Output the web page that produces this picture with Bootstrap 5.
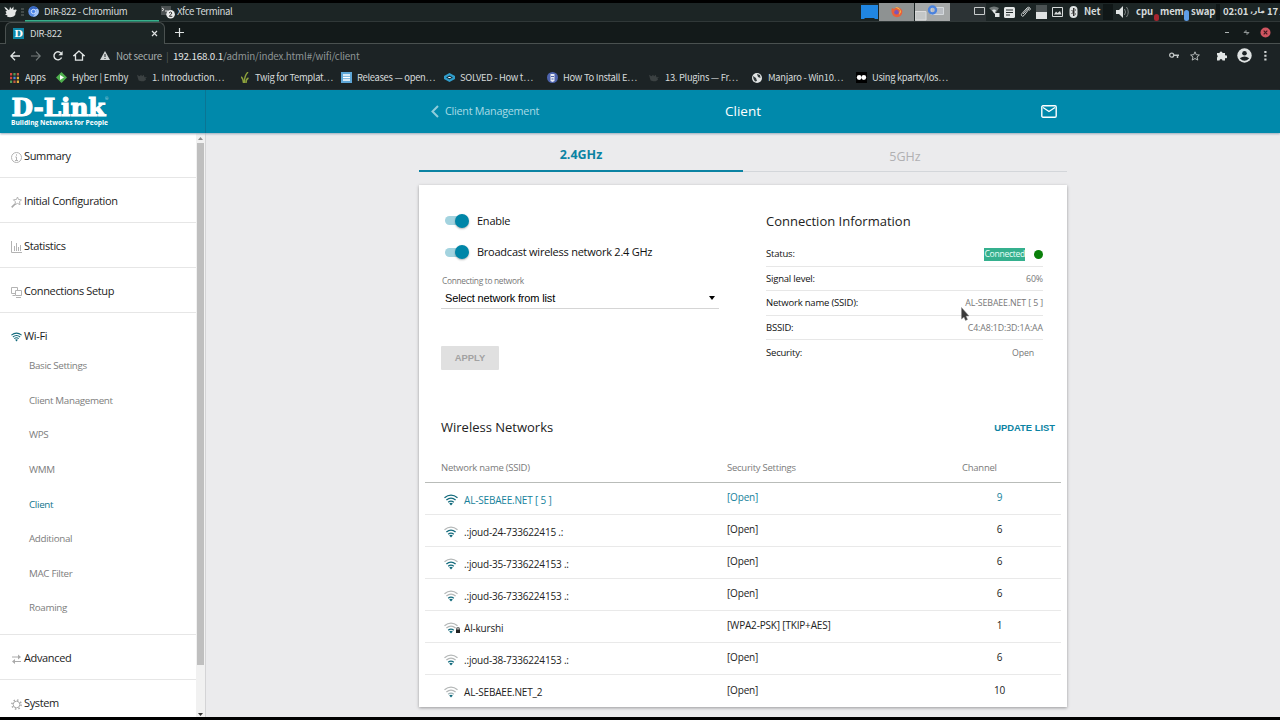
<!DOCTYPE html>
<html lang="en">
<head>
    <meta charset="UTF-8">
    <meta name="viewport" content="width=device-width, initial-scale=1.0">
    <title>DIR-822</title>
    <link rel="stylesheet" href="https://cdn.jsdelivr.net/npm/bootstrap@5.3.2/dist/css/bootstrap.min.css">
    <style>
        body {
            width: 1280px;
            height: 720px;
            padding: 3px 0;
            overflow: hidden;
            background: #000;
            font-family: "Open Sans", "Noto Sans", sans-serif;
            font-size: 12px;
            line-height: 16px;
            color: #222;
        }
        svg { display: block; flex: none; }
        .desk, .strip, .toolbar, .marks {
            font-family: "Noto Sans CJK SC", sans-serif;
            font-size: 9.4px;
            letter-spacing: -.3px;
            white-space: nowrap;
            color: #d5dada;
        }

        /* desktop panel */
        .desk { height: 19px; background: #1c2525; border-bottom: 1px solid #303838; }
        .desk > * { flex: none; }
        .desk span { position: relative; top: -1px; }
        .task { height: 17px; font-size: 9.6px; letter-spacing: -.35px; }
        .task.active { border-bottom: 1px solid #38b08c; box-shadow: 0 1px #2a7a64; }
        .space { width: 35px; height: 18px; background: #8e9292; }
        .tray { font-weight: 700; font-size: 9.6px; letter-spacing: -.1px; }
        .gap-block { background: #101717; height: 16px; }
        .pill { width: 5px; border-radius: 3px; align-self: flex-end; }

        /* browser */
        .strip { height: 22px; background: #131a1a; border-bottom: 1px solid #4a5150; }
        .browser-tab { width: 160px; height: 22px; background: #1c2525; border: 1px solid #4a5150; border-bottom: 0; border-radius: 6px 6px 0 0; margin-left: 5px; padding-left: 7px; }
        .toolbar { height: 25px; background: #1c2325; padding-bottom: 2px; font-size: 9.8px; }
        .address { letter-spacing: -.15px; color: #e3e6e6; }
        .marks { height: 21px; background: #1c2325; display: grid; grid-template-columns: 46px 81px 104px 100px 102px 104px 102px 103px 104px 1fr; padding: 0 0 4px 10px; }
        .marks span { margin-top: -1px; }

        /* router page */
        .page { height: 627px; background: #ebebed; }
        .top-bar { height: 43px; background: #0089ab; color: #fff; box-shadow: 0 1px 2px #9ab; z-index: 2; position: relative; }
        .brand-box { width: 206px; border-right: 1px solid #0a7594; padding: 5px 0 0 10px; }
        .content { width: 648px; margin-left: 213px; }
        .top-bar .content { padding-bottom: 1px; }
        .back { width: 254px; padding-left: 12px; color: #a9dbe6; font-size: 10.8px; letter-spacing: -.25px; }

        .side { width: 206px; background: #fff; border-right: 1px solid #d4d4d6; overflow: hidden; }
        .side-menu { width: 196px; }
        .side-item { height: 45px; border-bottom: 1px solid #e6e6e6; padding: 2px 0 0 11px; color: #1c1c1c; font-size: 11px; letter-spacing: -.36px; }
        .side-item svg { margin-right: 2px; margin-top: 2px; }
        .side-group { height: 322px; border-bottom: 1px solid #e6e6e6; }
        .side-group .side-item { border: 0; height: 36px; padding-top: 10px; }
        .side-sub { height: 34.6px; padding-left: 29px; color: #7d7d7d; font-size: 9.8px; letter-spacing: -.33px; }
        .side-sub.active { color: #11748b; }
        .scroller { width: 9px; background: #f1f1f1; }
        .scroller div { width: 7px; height: 522px; margin: 0 auto; background: #bfbfbf; }

        .band { height: 39px; border-bottom: 1px solid #d3d6da; font-size: 12.5px; color: #b0b0b2; }
        .band > div { width: 324px; height: 39px; padding-top: 8px; }
        .band .active { border-bottom: 2px solid #0b83a3; color: #0b83a3; font-weight: 700; padding-top: 6px; }
        .panel-card { height: 522px; margin-top: 13px; background: #fff; box-shadow: 0 1px 3px rgba(0,0,0,.35); }
        .settings { width: 300px; padding: 20px 0 0 22px; }
        .switch-row { height: 31.5px; font-size: 11px; letter-spacing: -.24px; color: #111; }
        .knob-track { width: 22px; height: 9px; margin: 0 10px 0 4px; border-radius: 5px; background: #a3d3df; }
        .knob { width: 14px; height: 14px; margin: -2.5px 0 0 10px; border-radius: 50%; background: #0086a8; box-shadow: 0 1px 2px rgba(0,0,0,.3); }
        .pick-label { font-size: 8.4px; letter-spacing: -.32px; color: #777; padding: 5px 0 0 1px; }
        .pick { width: 278px; height: 20px; border-bottom: 1px solid #d5d5d5; font: 11px/18px "Liberation Sans", sans-serif; letter-spacing: -.15px; color: #000; padding: 0 4px 2px; }
        .caret { border: 3.5px solid transparent; border-top: 4px solid #000; border-bottom: 0; }
        .apply { width: 58px; height: 24px; background: #e0e0e0; color: #a2a2a2; border: 0; border-radius: 1px; padding: 0; font: 700 9.4px/24px "Liberation Sans", sans-serif; }
        h2 { font-size: 13px; line-height: 18px; margin: 0; color: #222; font-weight: 400; }
        .info { width: 277px; margin-left: 47px; padding-top: 27px; }
        .info-row { height: 24.6px; border-bottom: 1px solid #e7e7e7; font-size: 9.5px; letter-spacing: -.2px; color: #111; padding-top: 1px; }
        .info-row span:last-child { color: #777; font-size: 8.8px; letter-spacing: -.12px; }
        .info-row:last-child { border: 0; }
        .info-row .picked { background: #35b08e; color: #e9fff8; font-size: 8.6px; line-height: 13px; letter-spacing: -.3px; margin-right: 9px; }
        .dot { width: 9px; height: 9px; border-radius: 50%; background: #0a800a; }

        .net-row { display: grid; grid-template-columns: 302px 235px 75px 1fr; height: 32px; margin: 0 6px; border-bottom: 1px solid #e9e9e9; font-size: 10px; letter-spacing: -.18px; color: #222; align-items: center; }
        .net-row > :first-child { padding-left: 19px; padding-top: 2px; }
        .net-row > :nth-child(2), .net-row > :nth-child(3) { padding-bottom: 3px; }
        .net-row > :nth-child(3) { text-align: center; }
        .net-row.active { color: #16829c; }
        .net-row:last-child { border: 0; }
        .net-head { height: 32px; border-bottom: 1px solid #b9bcb9; color: #7b7b7b; font-size: 9.5px; letter-spacing: -.25px; }
        .net-head > :first-child { padding: 2px 0 0 16px; }
        .net-head > :nth-child(2), .net-head > :nth-child(3) { padding: 2px 0 0; }
        .update { font: 700 9.4px/16px "Liberation Sans", sans-serif; color: #0b83a3; padding-top: 2px; }

        .wave { width: 14px; height: 12px; margin-right: 6px; --w1: #126a7c; --w2: #126a7c; --w3: #126a7c; --w4: #126a7c; }
        .lvl3 { --w4: #b5b8b8; }
        .lvl2 { --w4: #b5b8b8; --w3: #b5b8b8; }
        .lvl1 { --w4: #b5b8b8; --w3: #b5b8b8; --w2: #9fb4b8; }
        .padlock { margin: 5px 4px 0 -8px; }
        .pointer { position: absolute; left: 961px; top: 307px; z-index: 5; }
    </style>
</head>
<body>

<svg width="0" height="0" class="position-absolute">
    <symbol id="wave" viewBox="0 0 14 12">
        <g fill="none" stroke-width="1.3">
            <path d="M.5 3.7Q7-1.6 13.5 3.7" stroke="var(--w4)"/>
            <path d="M2.400 6Q7 2.200 11.600 6" stroke="var(--w3)"/>
            <path d="M4.200 8.200Q7 5.900 9.800 8.200" stroke="var(--w2)"/>
        </g>
        <path d="M5.200 9.400Q7 8.200 8.800 9.400L7 11.600z" fill="var(--w1)"/>
    </symbol>
    <symbol id="chromium" viewBox="0 0 12 12">
        <circle cx="6" cy="6" r="5.7" fill="#5b8ee6"/><path d="M6 .3a5.7 5.7 0 0 1 5 3L6 3.300A2.800 2.800 0 0 0 3.400 5L1.600 2.400A5.700 5.700 0 0 1 6 .3z" fill="#3767c2"/><path d="M11 3.300a5.700 5.700 0 0 1-5.400 8.400L8.400 7.400A2.800 2.800 0 0 0 8 3.300z" fill="#a8c8fa"/><circle cx="6" cy="6" r="2.400" fill="#4a83e8" stroke="#e6efff" stroke-width=".9"/>
    </symbol>
    <symbol id="fish" viewBox="0 0 12 10">
        <path d="M0 1l3 2 2-2 1 2 2-2 1 3h3l-2 2 1 1-3 2H5L2 8 1 5z" fill="#3b4142"/>
    </symbol>
</svg>

<!-- Desktop panel -->
<div class="desk d-flex align-items-center">
    <svg width="13" height="12" viewBox="0 0 13 12" style="margin-left:4px"><path d="M.3.8Q3 1.500 4.500 4L5.500 3.500 6 .8 7.500 3 9.500.5 9.500 4Q12 3 12.800 4L11.500 6.500Q12 9 9.500 10.500 6 12 3 10.500L3.500 9.500 1 8.500 2.500 7.500 1.500 5.500 3 4.800Q1 3.500.3.800z" fill="#e3e6e5"/></svg>
    <svg width="3" height="8" viewBox="0 0 3 8" style="margin-left:4px"><path d="M0 1h3M0 4h3M0 7h3" stroke="#68706f"/></svg>
    <div class="task active d-flex align-items-center" style="width:134px;margin-left:1px">
        <svg width="11" height="11" style="margin-left:3px"><use href="#chromium"/></svg><span style="margin-left:5px">DIR-822 - Chromium</span>
    </div>
    <div class="task d-flex align-items-center" style="width:702px">
        <svg width="15" height="14" viewBox="0 0 15 14" style="margin-left:2px"><path d="M0 1h10v9H0z" fill="#4b5152"/><path d="M1 3l2 1.500L1 6M4 6h3" stroke="#ddd" fill="none"/><circle cx="9.600" cy="9.200" r="4.300" fill="#e9ebeb"/><path d="M8 8q1.600-2 3 0L8.300 11.300H11.300" fill="none" stroke="#333"/></svg><span style="margin-left:1px">Xfce Terminal</span>
    </div>
    <svg width="17" height="14" viewBox="0 0 17 14"><path d="M0 0h17v14h-3l-1-1H4l-1 1H0z" fill="#2086e2"/></svg>
    <div class="space d-flex justify-content-center align-items-center" style="margin-left:1px">
        <svg width="12" height="12" viewBox="0 0 12 12"><path d="M1 2l2 1Q6 0 9 2l2 2q1 3-1 5.500-4 3.500-8 0Q-.5 6 1 2z" fill="#e9603a"/><path d="M4 1q5 0 6 5L8 9 9 4z" fill="#f7c04a"/><circle cx="5.500" cy="6.300" r="2.300" fill="#7a55b8"/></svg>
    </div>
    <svg width="35" height="18" viewBox="0 0 35 18" style="margin-left:1px"><path d="M0 0h35v18H0z" fill="#a5a8a8"/><path d="M0 8.500h11V17H0z" fill="#c4c7c7" stroke="#ddd"/><path d="M16 4.500h12.500v7H16z" fill="#b9bdc3" stroke="#d5d9dd"/><circle cx="17.500" cy="7" r="3.500" fill="none" stroke="#4a82dd" stroke-width="2.400"/></svg>
    <svg width="36" height="18" viewBox="0 0 36 18"><path d="M0 0h36v18H0z" fill="#2c3335"/><path d="M24.500 4.500h10v7h-10z" fill="#2c3335" stroke="#c8cccc"/></svg>
    <svg width="11" height="12" viewBox="0 0 11 12" style="margin-left:3px"><path d="M0 2Q5-1 10 2L6 8z" fill="#727979"/><path d="M3 4q2-1 4 0L5.500 8z" fill="#e0e4e4"/><path d="M6 7h4.500v4H6z" fill="#e0e4e4"/></svg>
    <svg width="11" height="11" viewBox="0 0 11 11" style="margin-left:4px"><rect width="11" height="11" rx="1.500" fill="#e5e8e8"/><path d="M2 3h7M2 5.500h7M2 8h4" stroke="#222a2a"/></svg>
    <svg width="11" height="12" viewBox="0 0 11 12" style="margin-left:5px"><path d="M3 8l4.500-5q1-1 1.500 0L4 9.500Q2.500 11 1.500 9.500 1 8.500 2 7.500L7 2q1.500-1.500 3 0 .8 1.300-.5 2.500" fill="none" stroke="#d0d4d4"/></svg>
    <svg width="11" height="14" viewBox="0 0 11 14" style="margin-left:5px"><path d="M0 0h11v7H0z" fill="#4b5253"/><path d="M0 7h11v7H0z" fill="#e0e3e3"/></svg>
    <svg width="11" height="10" viewBox="0 0 11 10" style="margin-left:5px"><path d="M.5.5h10v9H.5z" fill="none" stroke="#d8dcdc"/><path d="M2 7.500l2-3 1.500 1.500L8 4l1.500 3.500z" fill="#d8dcdc"/></svg>
    <svg width="9" height="12" viewBox="0 0 9 12" style="margin-left:6px"><rect x=".5" width="8" height="12" rx="4" fill="#dfe3e3"/><path d="M2.500 4l4 4-2 2V2l2 2-4 4" fill="none" stroke="#222" stroke-width=".9"/></svg>
    <span class="tray" style="margin-left:6px;width:19px">Net</span>
    <div class="gap-block" style="width:10px"></div>
    <svg width="14" height="12" viewBox="0 0 14 12" style="margin-left:3px"><path d="M0 4h3l4-4v12L3 8H0z" fill="#e0e4e4"/><path d="M8.500 3q2 3 0 6M10.500 1q3.500 5 0 10" fill="none" stroke="#7d8484"/></svg>
    <span class="tray" style="margin-left:6px;width:18px">cpu</span><div class="pill" style="height:7px;background:#a8262f"></div>
    <span class="tray" style="margin-left:1px;width:24px">mem</span><div class="pill" style="height:11px;background:#5f9de8"></div>
    <span class="tray" style="margin-left:2px;width:25px">swap</span><div class="gap-block" style="width:4px"></div>
    <div class="tray d-flex" style="margin-left:3px;width:58px;gap:2px">
        <span>02:01</span><span dir="rtl" style="font-family:'DejaVu Sans',sans-serif;font-size:7.500px;letter-spacing:0">مار,</span><span>17</span><span style="font-family:'DejaVu Sans',sans-serif;font-size:7.500px">ر</span>
    </div>
</div>

<!-- Browser tabs -->
<div class="strip d-flex align-items-center">
    <div class="browser-tab d-flex align-items-center">
        <svg width="11" height="11" viewBox="0 0 11 11"><path d="M0 0h11v11H0z" fill="#0f87a6"/><text x="1.200" y="9.200" font-family="DejaVu Serif" font-weight="700" font-size="10" fill="#fff">D</text></svg>
        <span style="margin-left:6px;width:121px">DIR-822</span>
        <svg width="7" height="7" viewBox="0 0 7 7"><path d="M1 1l5 5M6 1L1 6" stroke="#dfe3e3" stroke-width="1.200"/></svg>
    </div>
    <svg width="9" height="9" viewBox="0 0 9 9" style="margin-left:10px"><path d="M4.500 0v9M0 4.500h9" stroke="#dfe3e3" stroke-width="1.200"/></svg>
    <svg class="ms-auto" width="46" height="11" viewBox="0 0 46 11" style="margin-right:9px"><path d="M0 5.500h4" stroke="#aeb4b4"/><path d="M19 5.500l2-2v2h3l-2 2v-2z" stroke="#8e9494" fill="none"/><circle cx="40.500" cy="5.500" r="5" fill="#cf5560"/><path d="M38.700 3.700l3.600 3.600M42.300 3.700l-3.600 3.600" stroke="#401a20" stroke-width="1.200"/></svg>
</div>

<!-- Address bar -->
<div class="toolbar d-flex align-items-center">
    <svg width="10" height="10" viewBox="0 0 10 10" style="margin-left:10px"><path d="M10 5H1M5 .7L.8 5 5 9.300" fill="none" stroke="#e2e6e6" stroke-width="1.300"/></svg>
    <svg width="10" height="10" viewBox="0 0 10 10" style="margin-left:11px"><path d="M0 5h9M5 .7L9.200 5 5 9.300" fill="none" stroke="#747b7b" stroke-width="1.200"/></svg>
    <svg width="10" height="10" viewBox="0 0 10 10" style="margin-left:12px"><path d="M8.600 6.500A4 4 0 1 1 8 2.200" fill="none" stroke="#e2e6e6" stroke-width="1.400"/><path d="M9.600 0v4.200H5.400z" fill="#e2e6e6"/></svg>
    <svg width="12" height="11" viewBox="0 0 12 11" style="margin-left:10px"><path d="M6 1L1 5.500h1.500v4.700h7V5.500H11z" fill="none" stroke="#e2e6e6" stroke-width="1.300"/></svg>
    <svg width="10" height="9" viewBox="0 0 10 9" style="margin-left:15px"><path d="M5 0l5 9H0z" fill="#d0d4d4"/><path d="M5 3v3M5 7v1" stroke="#1c2325"/></svg>
    <span style="margin-left:6px;width:50px;color:#a7adad">Not secure</span>
    <span style="width:7px;color:#565d5e">|</span>
    <span class="address">192.168.0.1<span style="color:#8e9595">/admin/index.html#/wifi/client</span></span>
    <svg width="10" height="7" viewBox="0 0 10 7" class="ms-auto"><circle cx="2.700" cy="3.200" r="2" fill="none" stroke="#c0c5c5" stroke-width="1.300"/><path d="M5 3.200h5M8.500 3v3" stroke="#c0c5c5" stroke-width="1.500"/></svg>
    <svg width="10" height="10" viewBox="0 0 10 10" style="margin-left:11px"><path d="M5 .8l1.200 2.900 3.200.3-2.400 2 .8 3.100L5 7.500 2.200 9.100l.8-3.100-2.400-2 3.200-.3z" fill="none" stroke="#c5caca" stroke-width=".9"/></svg>
    <svg width="11" height="11" viewBox="0 0 11 11" style="margin-left:16px"><path d="M1 3h2.500a1.500 1.500 0 1 1 3 0H9v2.500a1.500 1.500 0 1 1 0 2.500v2.500H6.500a1.500 1.500 0 0 0-3 0H1V7.500a1.500 1.500 0 0 0 0-2.500z" fill="#e2e6e6"/></svg>
    <svg width="15" height="15" viewBox="0 0 15 15" style="margin-left:10px"><circle cx="7.500" cy="7.500" r="7.200" fill="#dfe3e3"/><circle cx="7.500" cy="5.200" r="2.300" fill="#1c2325"/><path d="M2.800 10.300q4.700-3.600 9.400 0-4.700 5-9.400 0z" fill="#1c2325"/></svg>
    <svg width="3" height="11" viewBox="0 0 3 11" style="margin:0 13px 0 12px"><path d="M.3 1h2.200v2H.3zM.3 4.700h2.200v2H.3zM.3 8.400h2.200v2H.3z" fill="#d0d4d4"/></svg>
</div>

<!-- Bookmarks -->
<div class="marks align-items-center">
    <div class="d-flex align-items-center"><svg width="9" height="10" viewBox="0 0 9 10"><path d="M0 0h2.200v2.500H0zM0 3.700h2.200v2.500H0z" fill="#d8453c"/><path d="M3.400 0h2.200v2.500H3.400zM0 7.400h2.200v2.500H0z" fill="#4e9c57"/><path d="M3.400 3.700h2.200v2.500H3.400z" fill="#4d86dd"/><path d="M6.800 0H9v2.500H6.800zM3.400 7.400h2.200v2.500H3.400z" fill="#c35a42"/><path d="M6.800 3.700H9v2.500H6.800zM6.800 7.400H9v2.500H6.800z" fill="#dfae3d"/></svg><span style="margin-left:6px">Apps</span></div>
    <div class="d-flex align-items-center"><svg width="11" height="11" viewBox="0 0 11 11"><path d="M5.500 0L11 5.500 5.500 11 0 5.500z" fill="#4fb04e"/><path d="M4 3l4 2.500L4 8z" fill="#fff"/></svg><span style="margin-left:5px;letter-spacing:-.15px">Hyber | Emby</span></div>
    <div class="d-flex align-items-center"><svg width="10" height="10"><use href="#fish"/></svg><span style="margin-left:5px;letter-spacing:-.15px">1. Introduction⋯</span></div>
    <div class="d-flex align-items-center"><svg width="8" height="11" viewBox="0 0 8 11"><path d="M2.500 11Q2 6 0 5M3.500 11Q3 4 7 0M5 11q0-4 2.500-5" stroke="#8ca13c" fill="none" stroke-width="1.400"/></svg><span style="margin-left:6px">Twig for Templat⋯</span></div>
    <div class="d-flex align-items-center"><svg width="11" height="11" viewBox="0 0 11 11"><path d="M0 0h11v11H0z" fill="#5ea6d6"/><path d="M2 3h7M2 5.500h7M2 8h7" stroke="#fff" stroke-width="1.300"/></svg><span style="margin-left:5px">Releases — open⋯</span></div>
    <div class="d-flex align-items-center" style="padding-left:1px"><svg width="11" height="9" viewBox="0 0 11 9"><path d="M5.500 0L11 3v3L5.500 9 0 6V3z" fill="#2f9ccb"/><path d="M2 4.500L5.500 2.500 9 4.500 5.500 6.500z" fill="#16343f"/><path d="M4.300 4.500h2.400" stroke="#fff"/></svg><span style="margin-left:5px">SOLVED - How t⋯</span></div>
    <div class="d-flex align-items-center"><svg width="11" height="11" viewBox="0 0 11 11"><circle cx="5.500" cy="5.500" r="5.500" fill="#4d63ad"/><path d="M3.500 2h4v7l-2 1-2-1z" fill="#e9ecf4"/><path d="M4 4.500h3M4.500 7h2" stroke="#4d63ad"/></svg><span style="margin-left:5px">How To Install E⋯</span></div>
    <div class="d-flex align-items-center"><svg width="10" height="10"><use href="#fish"/></svg><span style="margin-left:6px">13. Plugins — Fr⋯</span></div>
    <div class="d-flex align-items-center"><svg width="10" height="10" viewBox="0 0 10 10"><circle cx="5" cy="5" r="5" fill="#e1e4e4"/><path d="M1 3l3 2 1 3-2 .5Q1 6 1 3zM5 1l3 1 .5 3L6 4z" fill="#30383a"/></svg><span style="margin-left:6px">Manjaro - Win10⋯</span></div>
    <div class="d-flex align-items-center"><svg width="11" height="11" viewBox="0 0 11 11"><path d="M0 0h11v11H0z" fill="#000"/><circle cx="3.200" cy="5.500" r="2.400" fill="#fff"/><circle cx="7.800" cy="5.500" r="2.400" fill="#fff"/></svg><span style="margin-left:5px">Using kpartx/los⋯</span></div>
</div>

<!-- Router page -->
<div class="page">
    <div class="top-bar d-flex">
        <div class="brand-box">
            <svg width="110" height="36" viewBox="0 0 110 36" overflow="visible"><g fill="#fff"><text x="1.500" y="21" font-family="DejaVu Serif" font-weight="700" font-size="24" textLength="94" lengthAdjust="spacingAndGlyphs" stroke="#fff" stroke-width="1.100">D-Link</text><text x="1" y="29.500" font-family="Open Sans" font-weight="700" font-size="7.600" textLength="97" lengthAdjust="spacingAndGlyphs">Building Networks for People</text><text x="95" y="5" font-family="Open Sans" font-size="4" opacity=".7">®</text></g></svg>
        </div>
        <div class="content d-flex align-items-center">
            <div class="back d-flex align-items-center"><svg width="8" height="13" viewBox="0 0 8 13" style="margin-right:6px"><path d="M7 1L1.500 6.500 7 12" fill="none" stroke="#8fcddb" stroke-width="2"/></svg>Client Management</div>
            <div class="text-center" style="width:140px;font-size:13.500px">Client</div>
            <svg class="ms-auto" width="16" height="13" viewBox="0 0 16 13" style="margin-right:10px"><rect x=".8" y=".8" width="14.400" height="11.400" rx="1.200" fill="none" stroke="#fff" stroke-width="1.400"/><path d="M2 2.500l6 4 6-4" fill="none" stroke="#fff" stroke-width="1.300"/></svg>
        </div>
    </div>

    <div class="d-flex" style="height:584px">
        <div class="side d-flex">
            <div class="side-menu flex-shrink-0">
                <div class="side-item d-flex align-items-center"><svg width="11" height="11" viewBox="0 0 11 11"><circle cx="5.500" cy="5.500" r="5" fill="none" stroke="#b3b3b3"/><path d="M5.500 2.300v1.400M4.300 5h1.200v3.500M4 8.500h3" fill="none" stroke="#b3b3b3"/></svg>Summary</div>
                <div class="side-item d-flex align-items-center"><svg width="11" height="12" viewBox="0 0 11 12"><path d="M6.500 1l1 2.500 3 .3-2 2 .5 2.900-2.500-1.300L4 8.700l.4-2.900-2-2 3-.3z" fill="none" stroke="#b3b3b3"/><path d="M4 8L.7 11.400" stroke="#a8a8a8" stroke-width="1.600"/></svg>Initial Configuration</div>
                <div class="side-item d-flex align-items-center"><svg width="11" height="12" viewBox="0 0 11 12"><path d="M.5 0v11.500H11M3.500 10V5M5.500 10V2M7.500 10V6M9.500 10V4" fill="none" stroke="#b3b3b3"/></svg>Statistics</div>
                <div class="side-item d-flex align-items-center"><svg width="11" height="11" viewBox="0 0 11 11"><path d="M4 6.500H.5v-6h6V3M1.500 8.500H4M4.500 3.500h6v5h-6zM5 10.500h5" fill="none" stroke="#b3b3b3"/></svg>Connections Setup</div>
                <div class="side-group">
                    <div class="side-item d-flex align-items-center"><svg class="wave" style="width:11px;height:10px"><use href="#wave"/></svg>Wi-Fi</div>
                    <div class="side-sub d-flex align-items-center">Basic Settings</div>
                    <div class="side-sub d-flex align-items-center">Client Management</div>
                    <div class="side-sub d-flex align-items-center">WPS</div>
                    <div class="side-sub d-flex align-items-center">WMM</div>
                    <div class="side-sub active d-flex align-items-center">Client</div>
                    <div class="side-sub d-flex align-items-center">Additional</div>
                    <div class="side-sub d-flex align-items-center">MAC Filter</div>
                    <div class="side-sub d-flex align-items-center">Roaming</div>
                </div>
                <div class="side-item d-flex align-items-center"><svg width="11" height="10" viewBox="0 0 11 10"><path d="M1 3h7M3 7.500h7" stroke="#aaa"/><path d="M7 .5L10 3 7 5.500zM4 5L1 7.500 4 10z" fill="#aaa"/></svg>Advanced</div>
                <div class="side-item d-flex align-items-center"><svg width="11" height="11" viewBox="0 0 11 11"><circle cx="5.500" cy="5.500" r="3.300" fill="none" stroke="#aaa"/><circle cx="5.500" cy="5.500" r="4.600" fill="none" stroke="#aaa" stroke-width="1.600" stroke-dasharray="1.500 2.113"/></svg>System</div>
            </div>
            <div class="scroller flex-shrink-0 d-flex flex-column align-items-center">
                <svg width="9" height="10" viewBox="0 0 9 10"><path d="M2 7l2.500-3L7 7z" fill="#8a8a8a"/></svg>
                <div></div>
                <svg class="mt-auto" width="9" height="7" viewBox="0 0 9 7"><path d="M2 3l2.500 3L7 3z" fill="#333"/></svg>
            </div>
        </div>

        <div class="content">
            <div class="band d-flex">
                <div class="active d-flex align-items-center justify-content-center"><span>2.4GHz</span></div>
                <div class="d-flex align-items-center justify-content-center">5GHz</div>
            </div>
            <div class="panel-card">
                <div class="d-flex" style="height:233px">
                    <div class="settings">
                        <div class="switch-row d-flex align-items-center"><div class="knob-track"><div class="knob"></div></div>Enable</div>
                        <div class="switch-row d-flex align-items-center"><div class="knob-track"><div class="knob"></div></div>Broadcast wireless network 2.4 GHz</div>
                        <div class="pick-label">Connecting to network</div>
                        <div class="pick d-flex justify-content-between align-items-center"><span>Select network from list</span><div class="caret"></div></div>
                        <button type="button" class="apply" style="margin-top:37px">APPLY</button>
                    </div>
                    <div class="info">
                        <h2>Connection Information</h2>
                        <div style="padding-top:12px">
                            <div class="info-row d-flex align-items-center"><span class="me-auto">Status:</span><span class="picked">Connected</span><div class="dot"></div></div>
                            <div class="info-row d-flex align-items-center justify-content-between"><span>Signal level:</span><span>60%</span></div>
                            <div class="info-row d-flex align-items-center justify-content-between"><span>Network name (SSID):</span><span>AL-SEBAEE.NET [ 5 ]</span></div>
                            <div class="info-row d-flex align-items-center justify-content-between"><span>BSSID:</span><span>C4:A8:1D:3D:1A:AA</span></div>
                            <div class="info-row d-flex align-items-center justify-content-between"><span>Security:</span><span style="margin-right:9px">Open</span></div>
                        </div>
                    </div>
                </div>
                <div class="d-flex justify-content-between" style="padding:0 12px 0 22px;height:33px">
                    <h2>Wireless Networks</h2><span class="update">UPDATE LIST</span>
                </div>
                <div>
                    <div class="net-row net-head"><div>Network name (SSID)</div><div>Security Settings</div><div class="text-start">Channel</div></div>
                    <div class="net-row active"><div class="d-flex align-items-center"><svg class="wave"><use href="#wave"/></svg>AL-SEBAEE.NET [ 5 ]</div><div>[Open]</div><div>9</div></div>
                    <div class="net-row"><div class="d-flex align-items-center"><svg class="wave lvl3"><use href="#wave"/></svg>.:joud-24-733622415 .:</div><div>[Open]</div><div>6</div></div>
                    <div class="net-row"><div class="d-flex align-items-center"><svg class="wave lvl3"><use href="#wave"/></svg>.:joud-35-7336224153 .:</div><div>[Open]</div><div>6</div></div>
                    <div class="net-row"><div class="d-flex align-items-center"><svg class="wave lvl2"><use href="#wave"/></svg>.:joud-36-7336224153 .:</div><div>[Open]</div><div>6</div></div>
                    <div class="net-row"><div class="d-flex align-items-center"><svg class="wave lvl2"><use href="#wave"/></svg><svg class="padlock" width="4" height="6" viewBox="0 0 4 6"><path d="M0 2.500h4V6H0z" fill="#222"/><path d="M.8 3V.8h2.400V3" fill="none" stroke="#222" stroke-width=".8"/></svg>Al-kurshi</div><div>[WPA2-PSK] [TKIP+AES]</div><div>1</div></div>
                    <div class="net-row"><div class="d-flex align-items-center"><svg class="wave lvl2"><use href="#wave"/></svg>.:joud-38-7336224153 .:</div><div>[Open]</div><div>6</div></div>
                    <div class="net-row"><div class="d-flex align-items-center"><svg class="wave lvl1"><use href="#wave"/></svg>AL-SEBAEE.NET_2</div><div>[Open]</div><div>10</div></div>
                </div>
            </div>
        </div>
    </div>
</div>

<svg class="pointer" width="9" height="14" viewBox="0 0 9 14"><path d="M.5.5v11.500l2.500-2 1.500 3.500 2-1L5 9h3z" fill="#3a3a3a" stroke="#888" stroke-width=".5"/></svg>

<script src="https://cdn.jsdelivr.net/npm/bootstrap@5.3.2/dist/js/bootstrap.bundle.min.js"></script>
</body>
</html>
